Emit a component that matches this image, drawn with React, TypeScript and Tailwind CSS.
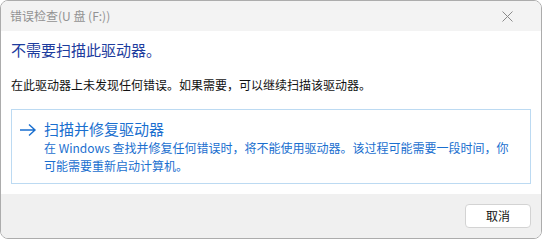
import React from "react";

const font = { fontFamily: '"Noto Sans CJK SC", "Microsoft YaHei", sans-serif' };

const ArrowIcon = () => (
  <svg width="18" height="14" viewBox="0 0 18 14" fill="none">
    <path d="M1 7h15M10 1.5L16 7l-6 5.5" stroke="#1a6fcf" strokeWidth="1.4" />
  </svg>
);

const CloseIcon = () => (
  <svg width="11" height="11" viewBox="0 0 11 11" fill="none">
    <path d="M0.5 0.5l10 10M10.5 0.5l-10 10" stroke="#8a8a8a" strokeWidth="1" />
  </svg>
);

export default function App() {
  return (
    <div
      className="w-[542px] h-[239px] flex flex-col border border-[#acacac] rounded-lg overflow-hidden bg-white"
      style={font}
    >
      <div className="h-[30px] shrink-0 flex items-center justify-between bg-[#f3f3f3] pl-[9px] pr-[28px]">
        <span className="text-[12px] leading-[16px] text-[#929292]">错误检查(U 盘 (F:))</span>
        <CloseIcon />
      </div>
      <div className="flex-1 flex flex-col px-[10px] pt-[9px]">
        <p className="text-[15px] leading-[20px] text-[#1d3c9e]">不需要扫描此驱动器。</p>
        <p className="mt-[16px] text-[12px] leading-[18px] text-[#111]">
          在此驱动器上未发现任何错误。如果需要，可以继续扫描该驱动器。
        </p>
        <div className="mt-[15px] border border-[#bcdaf2] flex pl-[7px] pr-[10px] pt-[9px] pb-[8px]">
          <div className="w-[25px] shrink-0 pt-[4px]">
            <ArrowIcon />
          </div>
          <div className="flex flex-col text-[#1a6fcf]">
            <span className="text-[15px] leading-[20px]">扫描并修复驱动器</span>
            <span className="text-[12px] leading-[18px]">
              在 Windows 查找并修复任何错误时，将不能使用驱动器。该过程可能需要一段时间，你可能需要重新启动计算机。
            </span>
          </div>
        </div>
      </div>
      <div className="h-[44px] shrink-0 bg-[#f0f0f0] flex items-start justify-end pt-[10px] pr-[10px]">
        <button className="w-[66px] h-[24px] rounded-[4px] bg-white border border-[#d3d3d3] text-[12px] text-[#111] leading-none">
          取消
        </button>
      </div>
    </div>
  );
}
